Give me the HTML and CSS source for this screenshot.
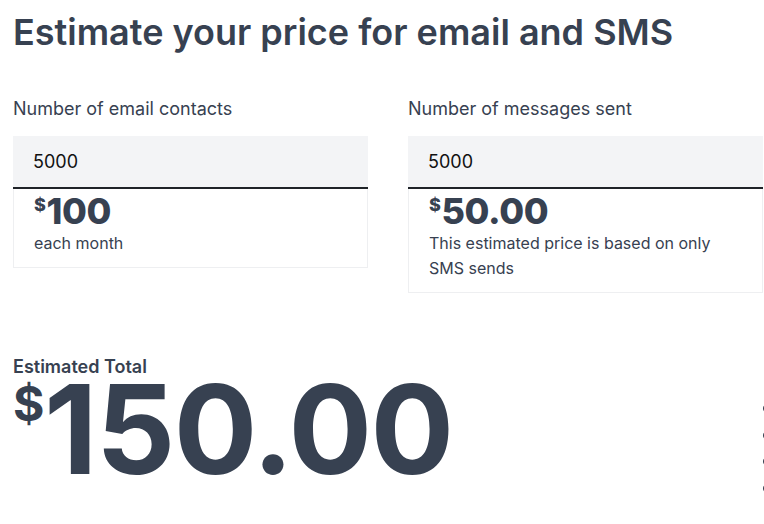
FILE: index.html
```html
<!DOCTYPE html>
<html lang="en">
<head>
<meta charset="utf-8">
<title>Estimate your price</title>
<link rel="stylesheet" href="styles.css">
</head>
<body>
<div class="page">
  <main class="main">
    <h1 class="title">Estimate your price for email and SMS</h1>
    <div class="fields">
      <div class="field">
        <label class="label" for="contacts">Number of email contacts</label>
        <input class="input" id="contacts" type="text" value="5000">
        <div class="card">
          <div class="price"><span class="cur">$</span>100</div>
          <p class="note">each month</p>
        </div>
      </div>
      <div class="field">
        <label class="label" for="messages">Number of messages sent</label>
        <input class="input" id="messages" type="text" value="5000">
        <div class="card">
          <div class="price"><span class="cur">$</span>50.00</div>
          <p class="note">This estimated price is based on only SMS sends</p>
        </div>
      </div>
    </div>
    <div class="total">
      <div class="total-label">Estimated Total</div>
      <div class="total-price"><span class="total-cur">$</span>150.00</div>
    </div>
  </main>
  <aside class="side">
    <ul class="bullets">
      <li class="bullet"></li>
      <li class="bullet"></li>
      <li class="bullet"></li>
      <li class="bullet"></li>
    </ul>
  </aside>
</div>
</body>
</html>
```

FILE: styles.css
```css
html, body {
  margin: 0;
  padding: 0;
  overflow: hidden;
  background: #ffffff;
}

body {
  font-family: Inter, "Noto Sans", "Liberation Sans", sans-serif;
  color: #374151;
}

.page {
  display: flex;
  padding-left: 13px;
  width: 1100px;
}

.main {
  width: 750px;
  flex: none;
}

.title {
  margin: 0;
  padding-top: 10px;
  font-size: 36px;
  line-height: 44px;
  font-weight: 600;
}

.fields {
  display: grid;
  grid-template-columns: 355px 355px;
  column-gap: 40px;
  align-items: start;
  margin-top: 43px;
}

.field {
  display: flex;
  flex-direction: column;
}

.label {
  font-size: 18px;
  line-height: 24px;
  font-weight: 400;
}

.input {
  margin: 15px 0 0;
  height: 53px;
  box-sizing: border-box;
  border: none;
  border-bottom: 2px solid #1f2328;
  background: #f3f4f6;
  padding: 0 20px;
  font-family: inherit;
  font-size: 18px;
  color: #111111;
  outline: none;
  width: 100%;
}

.card {
  border: 1px solid #eeeff1;
  border-top: none;
  padding: 3px 20px 11px;
}

.price {
  font-size: 36px;
  line-height: 39px;
  font-weight: 800;
  letter-spacing: -0.4px;
}

.cur {
  font-size: 18px;
  vertical-align: top;
  line-height: 26px;
  margin-right: 1px;
}

.note {
  margin: 0;
  font-size: 16px;
  line-height: 25px;
}

.total {
  margin-top: 62px;
}

.total-label {
  font-size: 18px;
  line-height: 24px;
  font-weight: 600;
}

.total-price {
  font-size: 124px;
  line-height: 100px;
  font-weight: 700;
  letter-spacing: -1.5px;
}

.total-cur {
  font-size: 48px;
  line-height: 50px;
  vertical-align: top;
  margin-right: 1px;
}

.side {
  padding-top: 401px;
}

.bullets {
  list-style: none;
  margin: 0;
  padding: 0;
}

.bullet {
  height: 26.7px;
  position: relative;
}

.bullet::before {
  content: "";
  position: absolute;
  left: 0;
  top: 4px;
  width: 7px;
  height: 7px;
  border-radius: 50%;
  background: #374151;
}
```
